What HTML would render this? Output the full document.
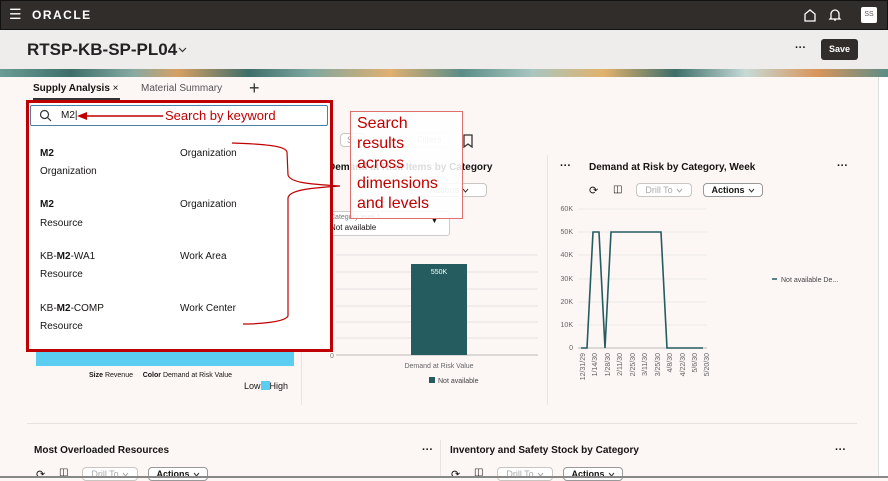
<!DOCTYPE html>
<html><head><meta charset="utf-8">
<style>
*{box-sizing:border-box;margin:0;padding:0}
body{width:888px;height:478px;overflow:hidden;font-family:"Liberation Sans",sans-serif;background:#fcf6f5;position:relative;color:#161513}
.abs{position:absolute}
.hdr{left:0;top:0;width:888px;height:30px;background:#312d2a;border:1px solid #111}
.title{left:0;top:30px;width:888px;height:39px;background:#eeedeb}
.banner{left:0;top:69px;width:888px;height:8px;background:linear-gradient(90deg,#6a9c95 0,#3e6e6a 8%,#86aaa3 15%,#d6a062 20%,#3e6e6a 28%,#7fa7a0 35%,#e0b070 44%,#5b8d87 52%,#a9c6c0 60%,#e2b26c 68%,#3e6e6a 76%,#c6dad6 84%,#d9955a 92%,#5b8d87 100%)}
.t{position:absolute;white-space:nowrap}
.btn{position:absolute;border:1px solid #c9c6c2;border-radius:4px;background:#fff;font-size:9px;height:14px;line-height:12px;padding:0 6px;white-space:nowrap;overflow:hidden;text-align:center}
.btn svg{vertical-align:0px;margin-left:3px}
.red{color:#c00000}
.it{font-size:10px}
</style></head><body>
<div class="abs hdr"></div>
<div class="t" style="left:9px;top:8px;color:#fff;font-size:14px;line-height:12px">&#9776;</div>
<div class="t" style="left:32px;top:8px;color:#fff;font-size:12px;letter-spacing:1.5px;font-weight:bold;line-height:14px">ORACLE</div>
<svg class="abs" style="left:803px;top:8px" width="14" height="14"><path d="M2 13V6L7 2L12 6V13Z" fill="none" stroke="#fff" stroke-width="1.3"/></svg>
<svg class="abs" style="left:828px;top:7px" width="14" height="15"><path d="M3 11V7a4 4 0 0 1 8 0v4l1 1H2Z M6 13h2" fill="none" stroke="#fff" stroke-width="1.3"/></svg>
<div class="t" style="left:861px;top:7px;width:16px;height:16px;background:#fff;border-radius:2px;font-size:7px;text-align:center;line-height:16px;color:#555">SS</div>
<div class="abs title"></div>
<div class="t" style="left:27px;top:40px;font-size:17px;font-weight:bold;color:#222">RTSP-KB-SP-PL04</div>
<svg class="abs" style="left:178px;top:47px" width="9" height="6"><path d="M1 1L4.5 4.5L8 1" fill="none" stroke="#333" stroke-width="1.2"/></svg>
<div class="t" style="left:795px;top:42px;font-size:11px;font-weight:bold">···</div>
<div class="t" style="left:821px;top:39px;width:37px;height:21px;background:#312d2a;color:#fff;border-radius:3px;font-size:9px;font-weight:bold;text-align:center;line-height:21px">Save</div>
<div class="abs banner"></div>
<div class="abs" style="left:878px;top:77px;width:10px;height:401px;background:#fff;border-left:1px solid #ddd"></div>
<div class="t" style="left:33px;top:83px;font-size:10px;font-weight:bold">Supply Analysis <span style="font-weight:normal">&#215;</span></div>
<div class="abs" style="left:33px;top:98px;width:87px;height:2px;background:#333"></div>
<div class="t" style="left:141px;top:83px;font-size:10px;color:#555">Material Summary</div>
<div class="t" style="left:249px;top:78px;font-size:18px;color:#333;font-weight:300">+</div>

<div class="btn" style="left:340px;top:133px;color:#999">Su</div>
<div class="btn" style="left:410px;top:133px;color:#bbb;border-color:#eee">Filters</div>
<svg class="abs" style="left:462px;top:134px" width="12" height="14"><path d="M2 1h8v12l-4-3-4 3Z" fill="none" stroke="#333" stroke-width="1.3"/></svg>
<div class="t" style="left:328px;top:162px;font-size:10px;font-weight:bold">Demand at Risk Items by Category</div>
<div class="t" style="left:560px;top:160px;font-size:11px;font-weight:bold">···</div>
<div class="btn" style="left:412px;top:183px;width:75px;color:#999">Actions<svg width="7" height="5"><path d="M1 1L3.5 4L6 1" fill="none" stroke="#333" stroke-width="1"/></svg></div>
<div class="abs" style="left:326px;top:211px;width:124px;height:25px;background:#fff;border:1px solid #ccc;border-radius:3px"></div>
<div class="t" style="left:330px;top:214px;font-size:7px;color:#777">Category level 1</div>
<div class="t" style="left:330px;top:223px;font-size:8px">Not available</div>
<div class="t" style="left:431px;top:218px;font-size:7px">▼</div>
<svg class="abs" style="left:330px;top:250px" width="215" height="140">
<g stroke="#e6e3e1" stroke-width="1"><line x1="6" y1="5" x2="208" y2="5"/><line x1="6" y1="22" x2="208" y2="22"/><line x1="6" y1="39" x2="208" y2="39"/><line x1="6" y1="56" x2="208" y2="56"/><line x1="6" y1="72" x2="208" y2="72"/><line x1="6" y1="88" x2="208" y2="88"/></g>
<line x1="6" y1="105" x2="208" y2="105" stroke="#bbb"/>
<rect x="81" y="14" width="56" height="91" fill="#255c60"/>
<text x="109" y="24" fill="#fff" font-size="7" text-anchor="middle" font-family="Liberation Sans">550K</text>
<text x="0" y="108" fill="#777" font-size="7" font-family="Liberation Sans">0</text>
<text x="109" y="118" fill="#666" font-size="7" text-anchor="middle" font-family="Liberation Sans">Demand at Risk Value</text>
<rect x="99" y="127" width="6" height="6" fill="#255c60"/>
<text x="108" y="133" fill="#444" font-size="7" font-family="Liberation Sans">Not available</text>
</svg>
<div class="abs" style="left:301px;top:155px;width:1px;height:250px;background:#e8e4e2"></div>
<div class="abs" style="left:547px;top:155px;width:1px;height:250px;background:#e8e4e2"></div>

<div class="t" style="left:589px;top:162px;font-size:10px;font-weight:bold">Demand at Risk by Category, Week</div>
<div class="t" style="left:837px;top:160px;font-size:11px;font-weight:bold">···</div>
<div class="t" style="left:589px;top:184px;font-size:11px">⟳</div>
<div class="t" style="left:613px;top:184px;font-size:10px">◫</div>
<div class="btn" style="left:636px;top:183px;width:56px;color:#aaa">Drill To<svg width="7" height="5"><path d="M1 1L3.5 4L6 1" fill="none" stroke="#aaa" stroke-width="1"/></svg></div>
<div class="btn" style="left:703px;top:183px;width:60px;font-weight:bold;border-color:#999">Actions<svg width="7" height="5"><path d="M1 1L3.5 4L6 1" fill="none" stroke="#333" stroke-width="1"/></svg></div>
<svg class="abs" style="left:560px;top:200px" width="320" height="200" font-family="Liberation Sans">
<g stroke="#eceae8"><line x1="18" y1="9" x2="147" y2="9"/><line x1="18" y1="32" x2="147" y2="32"/><line x1="18" y1="55" x2="147" y2="55"/><line x1="18" y1="79" x2="147" y2="79"/><line x1="18" y1="102" x2="147" y2="102"/><line x1="18" y1="125" x2="147" y2="125"/></g>
<line x1="18" y1="148" x2="147" y2="148" stroke="#bbb"/>
<g fill="#666" font-size="7" text-anchor="end"><text x="13" y="11">60K</text><text x="13" y="34">50K</text><text x="13" y="57">40K</text><text x="13" y="81">30K</text><text x="13" y="104">20K</text><text x="13" y="127">10K</text><text x="13" y="150">0</text></g>
<polyline points="21,148 27,148 33,32 39,32 45,148 51,32 101,32 107,148 143,148" fill="none" stroke="#255c60" stroke-width="1.6"/>
<g fill="#666" font-size="7" text-anchor="end">
<text transform="translate(25,153) rotate(-90)">12/31/29</text><text transform="translate(37,153) rotate(-90)">1/14/30</text><text transform="translate(50,153) rotate(-90)">1/28/30</text><text transform="translate(62,153) rotate(-90)">2/11/30</text><text transform="translate(75,153) rotate(-90)">2/25/30</text><text transform="translate(87,153) rotate(-90)">3/11/30</text><text transform="translate(100,153) rotate(-90)">3/25/30</text><text transform="translate(112,153) rotate(-90)">4/8/30</text><text transform="translate(125,153) rotate(-90)">4/22/30</text><text transform="translate(137,153) rotate(-90)">5/6/30</text><text transform="translate(149,153) rotate(-90)">5/20/30</text></g>
<line x1="212" y1="79" x2="217" y2="79" stroke="#255c60" stroke-width="1.5"/>
<text x="221" y="82" fill="#444" font-size="7">Not available De...</text>
</svg>

<div class="abs" style="left:36px;top:348px;width:258px;height:18px;background:#5bcdf0"></div>
<div class="t" style="left:89px;top:372px;font-size:7px"><b>Size</b> Revenue &nbsp;&nbsp;&nbsp;&nbsp;<b>Color</b> Demand at Risk Value</div>
<div class="t" style="left:244px;top:381px;font-size:9px">Low<span style="display:inline-block;width:9px;height:9px;background:#5bcdf0;vertical-align:-1px"></span>High</div>

<div class="abs" style="left:27px;top:423px;width:830px;height:1px;background:#e6e2e0"></div>
<div class="t" style="left:34px;top:445px;font-size:10px;font-weight:bold">Most Overloaded Resources</div>
<div class="t" style="left:422px;top:444px;font-size:11px;font-weight:bold">···</div>
<div class="abs" style="left:440px;top:440px;width:1px;height:38px;background:#e8e4e2"></div>
<div class="t" style="left:450px;top:445px;font-size:10px;font-weight:bold">Inventory and Safety Stock by Category</div>
<div class="t" style="left:835px;top:444px;font-size:11px;font-weight:bold">···</div>
<div class="t" style="left:36px;top:468px;font-size:11px">⟳</div>
<div class="t" style="left:59px;top:467px;font-size:10px">◫</div>
<div class="btn" style="left:82px;top:467px;width:56px;color:#aaa">Drill To<svg width="7" height="5"><path d="M1 1L3.5 4L6 1" fill="none" stroke="#aaa" stroke-width="1"/></svg></div>
<div class="btn" style="left:148px;top:467px;width:60px;font-weight:bold;border-color:#999">Actions<svg width="7" height="5"><path d="M1 1L3.5 4L6 1" fill="none" stroke="#333" stroke-width="1"/></svg></div>
<div class="t" style="left:451px;top:468px;font-size:11px">⟳</div>
<div class="t" style="left:474px;top:467px;font-size:10px">◫</div>
<div class="btn" style="left:497px;top:467px;width:56px;color:#aaa">Drill To<svg width="7" height="5"><path d="M1 1L3.5 4L6 1" fill="none" stroke="#aaa" stroke-width="1"/></svg></div>
<div class="btn" style="left:563px;top:467px;width:60px;font-weight:bold;border-color:#999">Actions<svg width="7" height="5"><path d="M1 1L3.5 4L6 1" fill="none" stroke="#333" stroke-width="1"/></svg></div>
<div class="abs" style="left:0;top:476px;width:888px;height:2px;background:#888"></div>

<div class="abs" style="left:26px;top:100px;width:307px;height:252px;background:#fff;border:3px solid #c00000"></div>
<div class="abs" style="left:30px;top:105px;width:298px;height:21px;border:1px solid #4a7fa8;border-radius:2px;background:#fff"></div>
<svg class="abs" style="left:39px;top:109px" width="13" height="13"><circle cx="5.5" cy="5.5" r="4" fill="none" stroke="#333" stroke-width="1.2"/><line x1="8.5" y1="8.5" x2="12" y2="12" stroke="#333" stroke-width="1.2"/></svg>
<div class="t" style="left:61px;top:110px;font-size:10px">M2|</div>
<svg class="abs" style="left:75px;top:110px" width="90" height="12"><line x1="10" y1="6" x2="88" y2="6" stroke="#c00000" stroke-width="1.5"/><path d="M2 6L12 2V10Z" fill="#c00000"/></svg>
<div class="t red" style="left:165px;top:108px;font-size:13px">Search by keyword</div>
<div class="t it" style="left:40px;top:148px;font-weight:bold">M2</div>
<div class="t it" style="left:180px;top:148px">Organization</div>
<div class="t it" style="left:40px;top:166px">Organization</div>
<div class="t it" style="left:40px;top:199px;font-weight:bold">M2</div>
<div class="t it" style="left:180px;top:199px">Organization</div>
<div class="t it" style="left:40px;top:218px">Resource</div>
<div class="t it" style="left:40px;top:251px">KB-<b>M2</b>-WA1</div>
<div class="t it" style="left:180px;top:251px">Work Area</div>
<div class="t it" style="left:40px;top:269px">Resource</div>
<div class="t it" style="left:40px;top:303px">KB-<b>M2</b>-COMP</div>
<div class="t it" style="left:180px;top:303px">Work Center</div>
<div class="t it" style="left:40px;top:321px">Resource</div>

<svg class="abs" style="left:0;top:0" width="888" height="478"><path d="M232 143C265 144 286 146 287 152L288 175C290 182 305 184 340 186M340 186C310 188 289 190 288 198L288 316C285 322 260 324 243 324" fill="none" stroke="#c00000" stroke-width="1.2"/></svg>

<div class="abs" style="left:350px;top:111px;width:113px;height:108px;background:rgba(255,255,255,0.85);border:1px solid #e07070"></div>
<div class="t red" style="left:357px;top:114px;font-size:16px;line-height:20px">Search<br>results<br>across<br>dimensions<br>and levels</div>
</body></html>
